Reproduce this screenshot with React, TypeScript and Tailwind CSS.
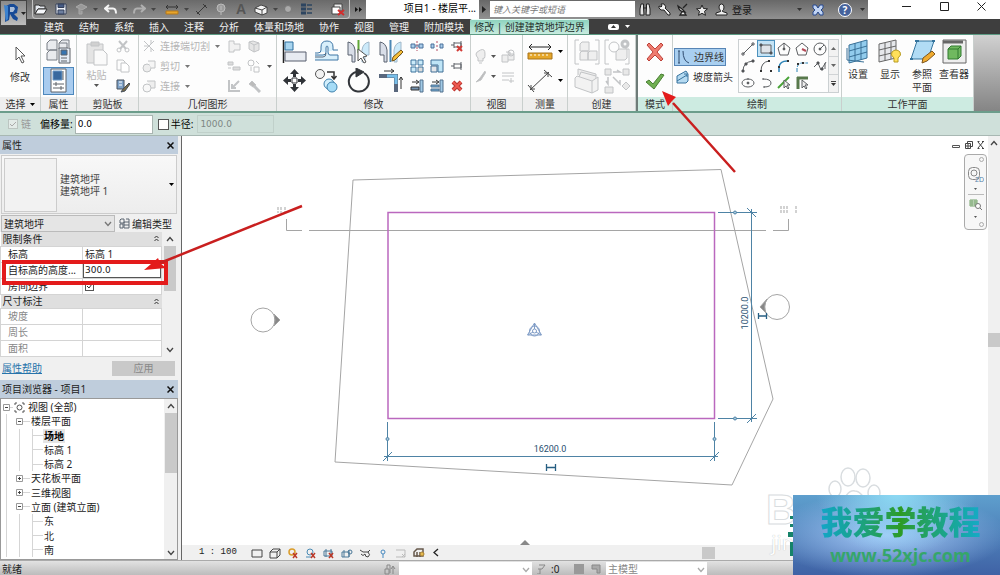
import React from "react";
import type { ReactNode } from "react";

type IconProps = { w?: number; h?: number; children: ReactNode; stroke?: string; className?: string };

function Svg({ w = 16, h = 16, children, stroke = "#5f6368", className = "" }: IconProps) {
  return (
    <svg width={w} height={h} viewBox={`0 0 ${w} ${h}`} fill="none" stroke={stroke} className={`shrink-0 ${className}`} aria-hidden="true">
      {children}
    </svg>
  );
}

function Tool({ label, children, className = "" }: { label: string; children: ReactNode; className?: string }) {
  return (
    <button type="button" aria-label={label} className={`flex shrink-0 items-center justify-center ${className}`}>
      {children}
    </button>
  );
}

function Caret({ className = "text-[#555]" }: { className?: string }) {
  return (
    <svg width="5" height="3" viewBox="0 0 5 3" className={`shrink-0 fill-current ${className}`} aria-hidden="true">
      <path d="M0 0h5L2.500 3z" />
    </svg>
  );
}

function Chevron({ up = false, color = "#444" }: { up?: boolean; color?: string }) {
  return (
    <Svg w={8} h={6} stroke={color}>
      <path d={up ? "M1 5l3-3.500 3 3.500" : "M1 1l3 3.500L7 1"} strokeWidth="1.300" />
    </Svg>
  );
}

function Panel({ title, width, green = false, children, menu = false }: { title: string; width: string; green?: boolean; children: ReactNode; menu?: boolean }) {
  return (
    <section className={`flex shrink-0 flex-col border-r border-[#c9cfcd] bg-[#fdfdfd] ${width}`}>
      <div className="flex h-[62px] items-center justify-center">{children}</div>
      <h2 className={`flex h-[14px] items-center justify-center gap-1 text-[10px] leading-none text-[#333] ${green ? "bg-[#cdebe1]" : "bg-[#eeeeee]"}`}>
        {title}
        {menu && <Caret className="text-black" />}
      </h2>
    </section>
  );
}

function QuickAccess() {
  const cell = "h-4 w-4";
  return (
    <div className="ml-8 flex h-[19px] w-[318px] shrink-0 items-center gap-1 rounded-b-sm border border-t-0 border-[#c4c4c4] bg-linear-to-b from-[#6a6a6a] to-[#8d8d8d] pr-[3px]">
      <Tool label="打开" className={cell}>
        <Svg w={14} h={12} stroke="#333">
          <path d="M1 2h4l1 1h5v3H4L1 11z" fill="#e6eaf0" />
          <path d="M4 6h9l-3 5H1z" fill="#f5f7fa" />
        </Svg>
      </Tool>
      <Tool label="保存" className={cell}>
        <Svg w={12} h={12} stroke="#34405a">
          <path d="M1 1h10v10H1z" fill="#eef2f8" />
          <path d="M3 1h6v3.500H3z" fill="#455b85" />
          <path d="M3 7h6v4H3z" fill="#6d7f9f" />
        </Svg>
      </Tool>
      <Tool label="同步" className={cell}>
        <Svg w={13} h={12} stroke="#a8a8a8">
          <path d="M1 4l5-3 6 3-5 3zM4 6v5h3V8" fill="#999" />
        </Svg>
      </Tool>
      <Caret className="text-[#444]" />
      <Tool label="放弃" className={cell}>
        <Svg w={13} h={11} stroke="#f4f4f4">
          <path d="M5 1L1 4.500 5 8M1.500 4.500H9q3 0 3 5" strokeWidth="2" />
        </Svg>
      </Tool>
      <Caret className="text-[#444]" />
      <Tool label="重做" className={cell}>
        <Svg w={13} h={11} stroke="#b0b0b0">
          <path d="M8 1l4 3.500L8 8M11.500 4.500H4q-3 0-3 5" strokeWidth="2" />
        </Svg>
      </Tool>
      <Caret className="text-[#444]" />
      <Tool label="测量" className={`ml-1 ${cell}`}>
        <Svg w={14} h={11} stroke="#333">
          <path d="M1 3h12M3 1L1 3l2 2M11 1l2 2-2 2" />
          <path d="M1 7h12v3H1z" fill="#e8a62c" stroke="#b5791b" />
        </Svg>
      </Tool>
      <Caret className="text-[#444]" />
      <Tool label="尺寸标注" className={cell}>
        <Svg w={13} h={13} stroke="#3a3a3a">
          <path d="M2 11L11 2M1 8l4 4M8 1l4 4" />
        </Svg>
      </Tool>
      <Tool label="标记" className={cell}>
        <Svg w={12} h={12} stroke="#bbb">
          <circle cx="6" cy="5" r="4" fill="#9c9c9c" />
          <path d="M6 3v4M6 9v3" />
        </Svg>
      </Tool>
      <Tool label="文字" className={`${cell} font-['Liberation_Sans'] text-[14px] font-bold leading-none text-[#555]`}>A</Tool>
      <Tool label="三维视图" className={cell}>
        <Svg w={14} h={13} stroke="#444">
          <path d="M1 5l6-3 6 2v6l-5 2-7-3z" fill="#f4f4f4" />
          <path d="M1 5l7 2 5-3M8 7v5" />
        </Svg>
      </Tool>
      <Caret className="text-[#444]" />
      <Tool label="剖面" className="h-4 w-3">
        <Svg w={10} h={10} stroke="#777"><circle cx="5" cy="5" r="3.500" fill="#aaa" /></Svg>
      </Tool>
      <Tool label="细线" className={cell}>
        <Svg w={13} h={12} stroke="#2d4560">
          <path d="M1 2h5M1 6h5M1 10h5" strokeWidth="3" /><path d="M7 2h5M7 6h5M7 10h5" strokeWidth="1.500" />
        </Svg>
      </Tool>
      <Tool label="关闭隐藏窗口" className={`ml-auto ${cell}`}>
        <Svg w={14} h={13} stroke="#444">
          <path d="M3 1h8v7H3z" fill="#eee" /><path d="M1 4h8v7H1z" fill="#fff" />
          <path d="M7 7l6 5M13 7l-6 5" stroke="#d12d2d" strokeWidth="2" />
        </Svg>
      </Tool>
    </div>
  );
}

function TitleBar() {
  return (
    <header className="relative bg-[#3e3e3e]">
      <div className="flex h-[19px] bg-linear-to-b from-[#686868] to-[#919191]">
        <QuickAccess />
        <Tool label="自定义" className="w-4">
          <Svg w={7} h={5} stroke="none"><path d="M0 0l3 2.500L0 5zM4 0l3 2.500L4 5z" fill="#111" /></Svg>
        </Tool>
        <div className="flex w-[113px] shrink-0 items-center justify-end bg-white pr-[3px] pb-1 text-[10px] leading-none text-black">项目1 - 楼层平...</div>
        <Tool label="展开" className="w-[11px]">
          <Svg w={5} h={7} stroke="none"><path d="M0 0l4 3.500L0 7z" fill="#222" /></Svg>
        </Tool>
        <input aria-label="搜索" placeholder="键入关键字或短语" className="mt-px h-4 w-[145px] shrink-0 bg-white px-[3px] text-[9px] leading-none italic placeholder:text-[#777]" />
        <div className="ml-1 flex items-center gap-[7px]">
          <Tool label="查找" className="h-4 w-3">
            <Svg w={12} h={13} stroke="#222">
              <path d="M2 1h2.500v4L5 12H1V6zM10 1H7.500v4L7 12h4V6zM5 5h2" fill="#e5e5e5" />
            </Svg>
          </Tool>
          <Tool label="速博" className="h-4 w-3">
            <Svg w={13} h={13} stroke="#222"><path d="M6 7H3L1 5V3l2 1 1-1-1-2h3l2 3-1 1 5 5v2h-2z" fill="#f2f2f2" /></Svg>
          </Tool>
          <Tool label="通信中心" className="h-4 w-3">
            <Svg w={12} h={13} stroke="#222"><path d="M1 3q1 6 7 6L5 6zM5 9l-2 3h6L7 9M6 5l4-4" fill="#eee" strokeWidth="1.300" /></Svg>
          </Tool>
          <Tool label="收藏夹" className="h-4 w-3">
            <Svg w={12} h={12} stroke="#222"><path d="M6 1l1.500 3.500 4 .3-3 2.500 1 4L6 9.300l-3.500 2 1-4-3-2.500 4-.3z" fill="#eee" /></Svg>
          </Tool>
          <button type="button" className="flex items-center gap-1 text-[10px] leading-none text-[#161616]">
            <Svg w={13} h={13} stroke="#222"><path d="M4 4q0-3 2.500-3T9 4 7.500 7.500v1L12 10v2H1v-2l4.500-1.500v-1Q4 6 4 4z" fill="#eee" /></Svg>
            登录
          </button>
        </div>
        <div className="flex flex-1 items-center justify-end gap-2 pr-[3px]">
          <Caret className="text-[#333]" />
          <Tool label="应用商店" className="h-4 w-4">
            <Svg w={12} h={12} stroke="#27498f">
              <path d="M1 1h3l2 3 2-3h3v3L9 6l2 2v3H8L6 8l-2 3H1V8l2-2-2-2z" fill="#c2d5f4" />
            </Svg>
          </Tool>
          <Tool label="帮助" className="ml-1 h-[14px] w-[14px] rounded-full border border-white bg-[#45629c] text-[10px] font-bold leading-none text-white">?</Tool>
          <Caret className="text-[#333]" />
        </div>
        <div className="flex w-[132px] shrink-0 items-center justify-between bg-white pr-[14px] pb-[6px] pl-[34px]">
          <Tool label="最小化"><Svg w={9} h={9} stroke="#222"><path d="M0 4.500h9" /></Svg></Tool>
          <Tool label="最大化"><Svg w={9} h={9} stroke="#222"><path d="M.5.5h8v8h-8z" /></Svg></Tool>
          <Tool label="关闭"><Svg w={9} h={9} stroke="#222"><path d="M.5.5l8 8M8.500.5l-8 8" /></Svg></Tool>
        </div>
      </div>
      <nav className="flex h-[15px] items-stretch pl-[44px] text-[10px] leading-none text-[#f1f1f1]">
        <div className="flex shrink-0 items-center gap-[15px]">
          {["建筑", "结构", "系统", "插入", "注释", "分析", "体量和场地", "协作", "视图", "管理", "附加模块"].map((t) => (
            <a key={t} href="#" className="shrink-0">{t}</a>
          ))}
        </div>
        <a href="#" className="ml-[6px] flex w-[119px] shrink-0 items-center justify-center rounded-t-xs border-t border-[#e8fff8] bg-linear-to-b from-[#8ed3bf] to-[#c8ebdf] text-[#26332f]">
          修改 | 创建建筑地坪边界
        </a>
        <div className="ml-[19px] flex items-center gap-[6px]">
          <Tool label="最小化功能区" className="h-[6px] w-[11px] rounded-xs bg-white">
            <Svg w={5} h={3} stroke="none"><path d="M0 3h5L2.500 0z" fill="#333" /></Svg>
          </Tool>
          <Caret className="text-white" />
        </div>
      </nav>
      <button type="button" aria-label="应用程序菜单" className="absolute top-0 left-0 flex h-[26px] w-[27px] items-center gap-px border border-[#444] bg-linear-to-b from-[#8a8a8a] to-[#bdbdbd] pl-[3px]">
        <Svg w={16} h={20} stroke="none">
          <path d="M2 3l4-2h4l4 3-1 6-3 1 4 4-1 3-4-2-3-5-1 6-4 2z" fill="#174a96" />
          <path d="M6 4h4l1 2-2 3H6z" fill="#a9bcd6" /><path d="M0 2l4 1v13l-2 2z" fill="#3b82cf" />
        </Svg>
        <Caret className="text-[#222]" />
      </button>
    </header>
  );
}

const PALE = "#c2c4c6";

function ModifyTools() {
  const big = "h-[26px] w-[26px]";
  return (
    <div className="flex w-full items-center gap-[6px] pl-1">
      <div className="grid grid-cols-[repeat(4,26px)] gap-x-[6px] gap-y-[3px]">
        <Tool label="对齐" className={big}>
          <Svg w={25} h={25}>
            <path d="M1.500 1v23" stroke="#222" strokeWidth="1.500" />
            <path d="M3 3h8v8H3z" fill="#a9d5ef" stroke="#2d6f9e" /><path d="M3 13h21v9H3z" fill="#e8ebf1" stroke="#565d6c" />
          </Svg>
        </Tool>
        <Tool label="偏移" className={big}>
          <Svg w={25} h={25} stroke="#3e76a5">
            <path d="M1 14h3q3 0 3-3V8q0-6 6-6t6 6v3h5M1 21h23v-5h-8q-2 0-2-3V9q0-2-1-2t-1 2v4q0 3-3 3H1" fill="#d8effb" />
            <path d="M1 18h8q3 0 3-4" stroke="#5e6b7c" />
          </Svg>
        </Tool>
        <Tool label="镜像 - 拾取轴" className={big}>
          <Svg w={25} h={25}>
            <path d="M2 3q6 1 7 8v12H6v-7H2z" fill="#d9dee8" stroke="#5a6371" /><path d="M23 3q-6 1-7 8v12h3v-7h4z" fill="#cceafa" stroke="#a1b8ca" />
            <path d="M12.500 1v13" stroke="#5fa636" strokeWidth="2" /><path d="M12 10v12l3-3 3 5 2-1-3-5 4-1z" fill="#fff" stroke="#555" />
          </Svg>
        </Tool>
        <Tool label="镜像 - 绘制轴" className={big}>
          <Svg w={25} h={25}>
            <path d="M2 3q6 1 7 8v12H6v-7H2z" fill="#d9dee8" stroke="#5a6371" /><path d="M23 3q-6 1-7 8v12h3v-7h4z" fill="#cceafa" stroke="#a1b8ca" />
            <path d="M12.500 1v22" stroke="#4d88b5" strokeWidth="2" /><path d="M14 22l1-4 8-7 2 2-8 8z" fill="#f5bf39" stroke="#765416" />
          </Svg>
        </Tool>
        <Tool label="移动" className={big}>
          <Svg w={25} h={25} stroke="#303338">
            <path d="M12.500 4v5M12.500 16v5M4 12.500h5M16 12.500h5" strokeWidth="3" />
            <path d="M8 6h9l-4.500-5zM8 19h9l-4.500 5zM6 8v9l-5-4.500zM19 8v9l5-4.500z" fill="#303338" stroke="none" /><path d="M10 10h5v5h-5z" fill="#fff" />
          </Svg>
        </Tool>
        <Tool label="复制" className={big}>
          <Svg w={25} h={25}>
            <circle cx="6" cy="6" r="4.500" fill="#f2f2f2" stroke="#555" /><circle cx="15" cy="16" r="5" fill="#d3effc" stroke="#3e81ad" />
            <circle cx="18" cy="19" r="5" fill="#a5dbf6" stroke="#3e81ad" /><path d="M13 4h7v6M17.500 8l2.500 3 2.500-3" stroke="#333" strokeWidth="1.500" />
          </Svg>
        </Tool>
        <Tool label="旋转" className={big}>
          <Svg w={25} h={25} stroke="#33363b">
            <path d="M10 4a10 10 0 1 0 8 1" strokeWidth="2" /><path d="M10 0l8 4-8 5z" fill="#33363b" />
          </Svg>
        </Tool>
        <Tool label="修剪/延伸为角" className={big}>
          <Svg w={25} h={25} stroke="#333">
            <path d="M6 3h10M13 1l3 2-3 2M23 21V9M21 12l2-3 2 3" /><path d="M1 8h17v16" stroke="#59677d" strokeWidth="4" />
            <path d="M9 8h9v8" stroke="#79bfe9" strokeWidth="3" />
          </Svg>
        </Tool>
      </div>
      <div className="grid grid-cols-[repeat(3,16px)] gap-x-1 gap-y-[6px]">
        <Tool label="拆分图元"><Svg w={14} h={14} stroke="#4a719b"><path d="M1 5h4v4H1zM9 5h4v4H9z" fill="#a9ccea" /><path d="M7 2v10" stroke="#b44f65" strokeDasharray="2 1" /><path d="M5 7h4" /></Svg></Tool>
        <Tool label="用间隙拆分"><Svg w={14} h={14} stroke="#4a719b"><path d="M1 5h3v4H1zM10 5h3v4h-3z" fill="#a9ccea" /><path d="M7 2v2M7 10v2M6 7h2" stroke="#b44f65" /></Svg></Tool>
        <Tool label="解锁"><Svg w={14} h={14} stroke="#5e6269"><path d="M1 6h3M4 3v6M4 4h7v4H4M11 2v8" /><path d="M7 7l5 5M12 7l-5 5" stroke="#d23b36" strokeWidth="2" /></Svg></Tool>
        <Tool label="阵列"><Svg w={14} h={14} stroke="#3d729c"><path d="M1 1h5v5H1zM8 1h5v5H8zM1 8h5v5H1z" fill="#caeaf9" /><path d="M8 8h5v5H8z" fill="#ddd" /></Svg></Tool>
        <Tool label="缩放"><Svg w={14} h={14} stroke="#416f95"><path d="M1 1h12v12H8V6H1z" fill="#bfe5f7" /><path d="M1 7h6v6H1z" fill="#e4e7eb" /></Svg></Tool>
        <Tool label="锁定"><Svg w={14} h={14} stroke="#5e6269"><path d="M1 7h3M4 4v6M4 5h7v4H4M11 3v8" /></Svg></Tool>
        <Tool label="修剪单个图元"><Svg w={14} h={14} stroke="#333"><path d="M2 3h6M6 1l3 2-3 2" /><path d="M1 8h8v3H1z" fill="#7492b0" /><path d="M10 1h3v12h-3z" fill="#a1cae6" stroke="#506f8b" /></Svg></Tool>
        <Tool label="修剪多个图元"><Svg w={14} h={14} stroke="#333"><path d="M2 3h6M6 1l3 2-3 2" /><path d="M1 6h8v2H1zM1 10h8v2H1z" fill="#69a5d2" stroke="#55738e" /><path d="M10 1h3v12h-3z" fill="#a1cae6" stroke="#506f8b" /></Svg></Tool>
        <Tool label="删除"><Svg w={14} h={14} stroke="#b93530"><path d="M3 3l8 8M11 3l-8 8" strokeWidth="4" /><path d="M3 3l8 8M11 3l-8 8" stroke="#ee5a50" strokeWidth="2" /></Svg></Tool>
      </div>
    </div>
  );
}

function DrawGallery() {
  const shapes: { label: string; art: ReactNode }[] = [
    { label: "直线", art: <path d="M2 12L12 2M1 11h2v2H1zM11 1h2v2h-2z" /> },
    { label: "矩形", art: <><path d="M2 3h10v8H2z" fill="#dfe4e9" /><path d="M1 2h2v2H1zM11 10h2v2h-2z" fill="#333" /></> },
    { label: "内接多边形", art: <><path d="M7 1l6 5-2 7H3L1 6z" /><path d="M7 1v6" /><circle cx="7" cy="7" r="1" fill="#333" /></> },
    { label: "外接多边形", art: <><path d="M7 1l6 5-2 7H3L1 6z" /><path d="M7 7l4 2" stroke="#b54b58" strokeWidth="2" /></> },
    { label: "圆形", art: <><circle cx="7" cy="7" r="6" /><path d="M7 7l4-4" /><circle cx="7" cy="7" r="1" fill="#333" /></> },
    { label: "起点-终点-半径弧", art: <><path d="M2 12Q2 3 12 2" /><path d="M1 11h2v2H1zM4 4h2v2H4zM11 1h2v2h-2z" fill="#333" /></> },
    { label: "圆心-端点弧", art: <><path d="M2 12Q2 3 10 2" /><path d="M1 11h2v2H1zM9 1h2v2H9zM11 11h2v2h-2z" fill="#333" stroke="none" /></> },
    { label: "相切-端点弧", art: <><path d="M2 13V8q1-6 8-6" stroke="#2c83b6" strokeWidth="1.500" /><path d="M1 7h2v2H1zM10 1h2v2h-2z" fill="#333" stroke="none" /></> },
    { label: "圆角弧", art: <><path d="M2 13V9q1-5 5-5h6" stroke="#2c83b6" strokeDasharray="4 1" /><path d="M2 4h2v2H2zM7 3h2v2H7z" fill="#333" stroke="none" /></> },
    { label: "样条曲线", art: <><path d="M1 8l4-4 3 7 5-8M12 4v6" /><path d="M4 3h2v2H4zM8 9h2v2H8z" fill="#333" /></> },
    { label: "椭圆", art: <><ellipse cx="7" cy="7" rx="6" ry="4" /><circle cx="7" cy="7" r="1" fill="#333" /><path d="M7 2v2" /></> },
    { label: "半椭圆", art: <path d="M4 3q8 0 8 4t-7 4M4 2v2M5 10v2" /> },
    { label: "拾取线", art: <><path d="M1 12L12 1" stroke="#49a338" strokeWidth="2" /><path d="M7 4v8l2-2 2 3 1-1-2-3h3z" fill="#eee" /></> },
    { label: "拾取墙", art: <><path d="M3 1v12M2 2h11" stroke="#58794c" strokeWidth="3" /><path d="M7 4v8l2-2 2 3 1-1-2-3h3z" fill="#eee" /></> },
  ];
  return (
    <div className="flex h-[54px] w-[101px] border border-[#cbd0d2]">
      <div className="grid flex-1 grid-cols-[repeat(5,18px)] grid-rows-3 overflow-hidden">
        {shapes.map((s) => (
          <Tool key={s.label} label={s.label} className={s.label === "矩形" ? "border border-[#4c91bd] bg-[#c4e3f5]" : ""}>
            <Svg w={14} h={14} stroke="#5c5f62">{s.art}</Svg>
          </Tool>
        ))}
      </div>
      <div className="grid w-[10px] grid-rows-3 divide-y divide-[#d0d3d5] border-l border-[#cbd0d2] bg-[#f2f2f2]">
        <Tool label="上一行"><Caret className="rotate-180 text-[#666]" /></Tool>
        <Tool label="下一行"><Caret className="text-[#666]" /></Tool>
        <Tool label="展开列表" className="flex-col gap-px"><span className="h-px w-[5px] bg-[#444]" /><Caret className="text-[#333]" /></Tool>
      </div>
    </div>
  );
}

function Ribbon() {
  const geo = [
    { t: "连接端切割", a: <path d="M2 2l5 5-5 5M2 7h5l5-5M7 7l5 5M9 1v4M9 9v4" /> },
    { t: "剪切", a: <><circle cx="5" cy="9" r="4" fill="#eee" /><path d="M6 2h7v7H9" fill="#f5f5f5" /></> },
    { t: "连接", a: <><path d="M5 2h8v7H9" fill="#eee" /><circle cx="5" cy="9" r="4" fill="#f8f8f8" /></> },
  ];
  return (
    <div className="flex border-t border-b-2 border-t-[#5d9b84] border-b-[#6c9d8b] bg-linear-to-b from-[#d1d1d1] to-[#858585]">
      <Panel title="选择" width="w-[41px]" menu>
        <button type="button" className="flex flex-col items-center gap-2 pb-1 text-[10px] leading-none text-[#333]">
          <Svg w={12} h={18} stroke="#555"><path d="M2 1v13l3-3 3 6 2-1-3-6h4z" fill="#fff" /></Svg>
          修改
        </button>
      </Panel>
      <Panel title="属性" width="w-[36px]">
        <div className="flex flex-col items-center gap-[2px]">
          <Tool label="类型属性" className="h-[27px] w-[31px]">
            <Svg w={25} h={25}><path d="M1 4l3-3h7v10H1zM13 4l3-3h7v7M1 14l3-3h7v10H1zM13 10V4h8v5" fill="#e9ebee" stroke="#777d84" /><path d="M13 9h11v15H13z" fill="#e5edf6" /><path d="M15 11h6v5h-6z" fill="#3674b0" /><path d="M15 19h6M15 22h6" /></Svg>
          </Tool>
          <Tool label="属性" className="h-[28px] w-[31px] border border-[#4d88bd] bg-[#a9ccef]">
            <Svg w={17} h={25}><path d="M1 1h15v23H1z" fill="#fff" /><path d="M3 3h9v9H3z" fill="#39699e" stroke="#6b98c5" /><path d="M13 3v9M3 16h11M3 20h11M6 14v4M11 18v4" /></Svg>
          </Tool>
        </div>
      </Panel>
      <Panel title="剪贴板" width="w-[62px]">
        <div className="flex items-center gap-2">
          <button type="button" className="flex flex-col items-center gap-1 pb-1 text-[10px] leading-none text-[#b7b7b7]">
            <Svg w={22} h={25} stroke={PALE}><path d="M1 3h16v19H1z" fill="#e4e4e4" /><path d="M5 1h8v4H5z" fill="#d0d0d0" /><path d="M8 9h9l4 4v11H8z" fill="#fafafa" /></Svg>
            粘贴
            <Caret className="text-[#555]" />
          </button>
          <div className="flex flex-col gap-[6px]">
            <Tool label="剪切到剪贴板"><Svg w={14} h={14} stroke={PALE}><path d="M3 2l7 8M11 2L4 10" strokeWidth="2" /><circle cx="3" cy="11" r="2" /><circle cx="11" cy="11" r="2" /></Svg></Tool>
            <Tool label="复制到剪贴板"><Svg w={14} h={14} stroke={PALE}><path d="M1 1h6l2 2v8H1z" /><path d="M5 4h5l3 3v6H5z" fill="#fff" /></Svg></Tool>
            <Tool label="匹配类型属性"><Svg w={14} h={14} stroke="#47515c"><path d="M1 1h7v9H1z" fill="#7fa3c9" /><path d="M3 3h3M3 6h3" stroke="#fff" /><path d="M13 4L7 10l-2 3 4-1 5-7z" fill="#786b47" /></Svg></Tool>
          </div>
        </div>
      </Panel>
      <Panel title="几何图形" width="w-[138px]">
        <div className="flex w-full items-center justify-between pr-1 pl-[3px]">
          <div className="flex flex-col gap-[6px]">
            {geo.map((g) => (
              <button key={g.t} type="button" className="flex h-[14px] items-center gap-1 text-[10px] leading-none text-[#b5b5b5]">
                <Svg w={14} h={14} stroke={PALE}>{g.a}</Svg>
                {g.t}
                <Caret className="ml-px text-[#777]" />
              </button>
            ))}
          </div>
          <div className="grid grid-cols-[14px_14px_5px] items-center gap-x-[6px] gap-y-[6px]">
            <Tool label="墙连接"><Svg w={14} h={14} stroke={PALE}><path d="M2 2h5v3h6v6H7v2H2z" fill="#f1f1f1" /></Svg></Tool>
            <Tool label="填色"><Svg w={14} h={14} stroke={PALE}><path d="M2 3l4-1 6 2v7l-5 2-5-3zM7 6v7M7 6l5-2M7 6L2 3" fill="#e5e5e5" /></Svg></Tool>
            <span />
            <Tool label="梁连接"><Svg w={14} h={14} stroke={PALE}><path d="M1 3h5v3H1zM6 8h7v3H6zM1 9h3" fill="#ddd" /></Svg></Tool>
            <Tool label="拆分面"><Svg w={14} h={14} stroke={PALE}><circle cx="4" cy="4" r="3" /><path d="M7 8h5v5H7zM9 2l3 3M4 8v4" /></Svg></Tool>
            <Caret />
            <Tool label="拆除"><Svg w={14} h={14} stroke={PALE}><path d="M2 1v11h11M5 9l7-7M5 5v4h4" strokeWidth="2" /></Svg></Tool>
            <Tool label="锤子"><Svg w={14} h={14} stroke={PALE}><path d="M2 5l3-3 4 4-3 2z" fill="#bbb" /><path d="M7 7l6 6" strokeWidth="3" /></Svg></Tool>
            <span />
          </div>
        </div>
      </Panel>
      <Panel title="修改" width="w-[194px]"><ModifyTools /></Panel>
      <Panel title="视图" width="w-[52px]">
        <div className="grid grid-cols-[11px_5px_14px] items-center gap-x-[5px] gap-y-[6px] pr-1">
          <Tool label="隐藏"><Svg w={11} h={15} stroke={PALE}><path d="M3 9Q1 7 1 5t4.500-4T10 5 8 9v3H3zM4 14h3" fill="#eee" /></Svg></Tool><Caret />
          <Tool label="置换"><Svg w={14} h={14} stroke={PALE}><path d="M1 6h6v7H1zM5 3h4v3M8 5h5v6H7" fill="#eee" /><circle cx="10" cy="4" r="3" /></Svg></Tool>
          <Tool label="替代"><Svg w={11} h={13} stroke={PALE}><path d="M10 1L5 8l-4 4 5-2 5-8" fill="#bbb" /></Svg></Tool><Caret />
          <Tool label="线处理"><Svg w={14} h={14} stroke={PALE}><path d="M1 3h12M1 6h12M1 10h7" /><path d="M10 8v5M8 11h5" /></Svg></Tool>
        </div>
      </Panel>
      <Panel title="测量" width="w-[45px]">
        <div className="grid grid-cols-[26px_5px] items-center gap-x-[5px] gap-y-[3px]">
          <Tool label="测量距离"><Svg w={26} h={26} stroke="#222"><path d="M2 8h22M5 5L2 8l3 3M21 5l3 3-3 3" /><path d="M1 14h24v6H1z" fill="#e5a72b" stroke="#a7731b" /><path d="M4 15v2M8 15v2M12 15v2M16 15v2M20 15v2" stroke="#fff" /></Svg></Tool><Caret className="text-black" />
          <Tool label="对齐标注"><Svg w={26} h={26} stroke="#444"><path d="M3 22L22 4M1 17l6 7M17 2l8 7M4 17v4h4M17 5h4v4" /></Svg></Tool><Caret className="text-black" />
        </div>
      </Panel>
      <Panel title="创建" width="w-[68px]">
        <div className="grid grid-cols-2 gap-x-1 gap-y-[3px]">
          <Tool label="创建组"><Svg w={26} h={26} stroke={PALE}><path d="M5 1H1v24h4M21 1h4v24h-4" /><path d="M6 5l2-2h7v9H6zM6 14l2-2h6v9H6zM14 14l2-2h7v9h-9z" fill="#efefef" /></Svg></Tool>
          <Tool label="创建类似"><Svg w={26} h={26} stroke={PALE}><path d="M5 1H1v24h4M21 10h4v15h-4" /><circle cx="10" cy="8" r="5" /><path d="M12 13l3-3h8v9l-2 2h-9z" fill="#efefef" /><circle cx="21" cy="5" r="3" strokeWidth="3" /></Svg></Tool>
          <Tool label="创建部件"><Svg w={26} h={26} stroke={PALE}><path d="M4 7V1l18 5v14" fill="#eee" /><path d="M1 10l2-2 15 5v12L1 19zM18 13l6-4v13l-6 3M5 9l2-5 15 4" fill="#f2f2f2" /></Svg></Tool>
          <Tool label="创建零件"><Svg w={26} h={26} stroke={PALE}><path d="M1 1h6v6H1zM19 1h6v6h-6zM1 19h8v6H1zM22 14l4 4-4 4-4-4z" fill="#e8e8e8" /><path d="M9 4h7l-3-2M4 9v7l-2-3M9 9l7 7v-4" strokeWidth="1.500" /></Svg></Tool>
        </div>
      </Panel>
      <div className="w-[2px] shrink-0 bg-[#6e7b78]" />
      <Panel title="模式" width="w-[35px]" green>
        <div className="flex flex-col gap-[10px]">
          <Tool label="取消编辑模式"><Svg w={20} h={20} stroke="#bd423a"><path d="M2 3l2-2 6 6 6-6 2 2-6 7 6 7-2 2-6-6-6 6-2-2 6-7z" fill="#ef7c70" /></Svg></Tool>
          <Tool label="完成编辑模式"><Svg w={20} h={18} stroke="#4b7f35"><path d="M1 10l3-2 4 4L16 2l3 1L9 17z" fill="#70b051" /></Svg></Tool>
        </div>
      </Panel>
      <Panel title="绘制" width="w-[169px]" green>
        <div className="flex w-full items-center gap-[5px] pr-[2px] pl-px">
          <div className="flex flex-1 flex-col gap-1 text-[10px] leading-none text-[#333]">
            <button type="button" className="flex h-[18px] w-[52px] items-center gap-1 border border-[#5785b5] bg-[#a9cff0] pl-[2px] whitespace-nowrap">
              <Svg w={13} h={14} stroke="#304c6f"><path d="M2 1v12M6 1q0 10 6 12M1 1h2M1 13h2" /></Svg>
              边界线
            </button>
            <button type="button" className="flex h-[14px] items-center gap-1 pl-[2px] whitespace-nowrap">
              <Svg w={13} h={14} stroke="#37739e"><path d="M1 6l9-5 2 3v7l-2 2H1z" fill="#b5daf1" /><path d="M1 11l10-6M8 4h3v3" /></Svg>
              坡度箭头
            </button>
          </div>
          <DrawGallery />
        </div>
      </Panel>
      <Panel title="工作平面" width="w-[132px]" green>
        <div className="grid h-full w-full grid-cols-4 pt-1 pr-[3px] text-[10px] leading-[13px] text-[#333]">
          <button type="button" className="flex flex-col items-center gap-1">
            <Svg w={24} h={25} stroke="#3a7197"><path d="M3 6l18-5v18L3 24z" fill="#92cced" /><path d="M9 4v18M15 3v18M3 12l18-5M3 18l18-5" /><path d="M1 9v12l17 2" /></Svg>
            设置
          </button>
          <button type="button" className="flex flex-col items-center gap-1">
            <Svg w={24} h={25} stroke="#666"><path d="M1 5l17-4v18L1 23z" fill="#e6e8eb" /><path d="M7 4v18M13 3v17M1 11l17-4M1 17l17-4" /><path d="M16 19q-4-3-2-6 4-4 8 0 2 3-2 6v4h-4z" fill="#ffe05a" stroke="#b89c25" /></Svg>
            显示
          </button>
          <button type="button" className="flex flex-col items-center gap-1">
            <Svg w={25} h={25} stroke="#35749d"><path d="M7 2h17l-6 18H1z" fill="#b1dcf5" /><path d="M5 2h4M22 2h3M0 20h3" strokeWidth="2" /><path d="M12 24l1-5 9-7 3 3-8 7z" fill="#f0ac31" stroke="#7e561c" /></Svg>
            <span className="text-center">参照<br />平面</span>
          </button>
          <button type="button" className="flex flex-col items-center gap-1 whitespace-nowrap">
            <Svg w={25} h={25} stroke="#666"><path d="M1 1h23v23H1z" fill="#eee" /><path d="M1 3h20" strokeWidth="3" /><path d="M6 10l3-3h10v10l-3 3H6z" fill="#70b95f" stroke="#317b31" /><path d="M6 10h10v10M16 10l3-3" stroke="#317b31" /></Svg>
            查看器
          </button>
        </div>
      </Panel>
    </div>
  );
}

function OptionsBar() {
  return (
    <div className="flex h-[23px] shrink-0 items-center border-b border-[#a8b8b3] bg-[#cfe0da] pl-2 text-[10px] leading-none">
      <label className="flex items-center gap-[3px] text-[#999]">
        <span className="relative flex size-[10px]">
          <input type="checkbox" defaultChecked disabled className="size-[10px] appearance-none border border-[#bcc5c1] bg-[#e3ebe8]" />
          <svg className="pointer-events-none absolute inset-0" width="10" height="10" viewBox="0 0 10 10" fill="none" stroke="#aaa"><path d="M2 5l2 2 4-4" /></svg>
        </span>
        链
      </label>
      <label className="ml-[9px] flex items-center gap-[2px] text-black">
        偏移量:
        <input defaultValue="0.0" className="h-[19px] w-[78px] border border-[#a9b5b1] bg-white px-[2px] font-['DejaVu_Sans'] text-[9px]" />
      </label>
      <label className="ml-[5px] flex items-center gap-[2px] text-black">
        <input type="checkbox" className="size-[11px] appearance-none border border-[#555] bg-white" />
        半径:
      </label>
      <input aria-label="半径值" disabled defaultValue="1000.0" className="ml-1 h-[18px] w-[77px] border border-[#c0d0ca] px-[2px] font-['DejaVu_Sans'] text-[9px] text-[#7e8784]" />
    </div>
  );
}

function PanelHeader({ title }: { title: string }) {
  return (
    <div className="flex h-[18px] shrink-0 items-center justify-between bg-[#bfcddc] pr-[2px] pl-[2px] text-[10px] leading-none text-[#222]">
      {title}
      <Tool label={`关闭${title}`} className="h-3 w-3"><Svg w={7} h={7} stroke="#111"><path d="M.5.5l6 6M6.500.5l-6 6" strokeWidth="1.500" /></Svg></Tool>
    </div>
  );
}

function Scroller({ thumb }: { thumb: string }) {
  return (
    <div className="flex w-[13px] shrink-0 flex-col items-center bg-[#f0f0f0]">
      <Tool label="向上滚动" className="h-[14px] w-full"><Chevron up /></Tool>
      <div className={`w-[12px] bg-[#c9c9c9] ${thumb}`} />
      <Tool label="向下滚动" className="mt-auto h-[13px] w-full"><Chevron /></Tool>
    </div>
  );
}

function GroupRow({ name }: { name: string }) {
  return (
    <tr className="h-[14px] bg-[#dfdfdf]">
      <th colSpan={2} className="p-0 pr-[3px] pl-[2px] text-left font-normal text-[#222]">
        <div className="flex items-center justify-between leading-none">
          {name}
          <Svg w={5} h={7} stroke="#333"><path d="M.5 3l2-2 2 2M.5 6l2-2 2 2" /></Svg>
        </div>
      </th>
    </tr>
  );
}

function Properties() {
  const cell = "border border-[#d4d4d4] p-0";
  return (
    <section className="shrink-0">
      <PanelHeader title="属性" />
      <div className="p-px">
        <button type="button" className="flex h-[59px] w-full items-center border border-[#ccc] bg-linear-to-b from-[#f8f8f8] to-[#ededed] px-[2px] text-left text-[10px] leading-[12px] text-[#444]">
          <span className="mr-[3px] h-[54px] w-[53px] border border-[#ccc] bg-[#f2f2f2]" />
          <span className="flex-1">建筑地坪<br />建筑地坪 1</span>
          <Caret className="text-black" />
        </button>
      </div>
      <div className="flex h-[17px] items-center text-[10px] leading-none">
        <div className="relative ml-px w-[114px]">
          <select aria-label="类别" className="h-[17px] w-full appearance-none border border-[#bbb] bg-[#e5e5e5] pl-[2px] text-[#222]"><option>建筑地坪</option></select>
          <span className="pointer-events-none absolute top-[6px] right-[3px]"><Chevron color="#777" /></span>
        </div>
        <button type="button" className="ml-1 flex items-center gap-[2px] text-[#222]">
          <Svg w={11} h={11} stroke="#5a6570"><path d="M1 2l1-1h3v4H1zM7 1h3v3M1 6h3v4H1zM5 4h5v6H5zM5 7h5" /></Svg>
          编辑类型
        </button>
      </div>
      <div className="flex h-[124px]">
        <table className="w-[162px] table-fixed border-collapse bg-white text-[10px] leading-none text-[#222]">
          <colgroup><col className="w-[82px]" /><col /></colgroup>
          <tbody>
            <GroupRow name="限制条件" />
            <tr className="h-4"><td className={`${cell} pl-[7px]`}>标高</td><td className={`${cell} pl-[2px]`}>标高 1</td></tr>
            <tr className="h-4">
              <td className={`${cell} pl-[7px] whitespace-nowrap`}>自标高的高度...</td>
              <td className={cell}><input aria-label="自标高的高度" defaultValue="300.0" className="block h-[15px] w-full border border-[#555] pl-px font-['DejaVu_Sans'] text-[9px]" /></td>
            </tr>
            <tr className="h-4"><td className={`${cell} pl-[7px]`}>房间边界</td><td className={`${cell} pl-[2px]`}>
              <label className="relative flex size-[9px]">
                <input type="checkbox" aria-label="房间边界" defaultChecked className="size-[9px] appearance-none border border-[#555]" />
                <svg className="pointer-events-none absolute inset-0" width="9" height="9" viewBox="0 0 9 9" fill="none" stroke="#333"><path d="M2 4l2 2 3-4" /></svg>
              </label>
            </td></tr>
            <GroupRow name="尺寸标注" />
            {["坡度", "周长", "面积"].map((n) => (
              <tr key={n} className="h-4 text-[#888]"><td className={`${cell} pl-[7px]`}>{n}</td><td className={cell} /></tr>
            ))}
          </tbody>
        </table>
        <div className="ml-px flex"><Scroller thumb="h-[45px]" /></div>
      </div>
      <div className="flex h-[24px] items-center justify-between pr-[3px] pl-[2px] text-[10px] leading-none">
        <a href="#" className="text-[#2673ab] underline">属性帮助</a>
        <button type="button" disabled className="h-[15px] w-[63px] bg-[#c9c9c9] text-[#888]">应用</button>
      </div>
    </section>
  );
}

function Browser() {
  const rows = [
    { d: 0, t: "视图 (全部)", s: "-" },
    { d: 1, t: "楼层平面", s: "-" },
    { d: 2, t: "场地", b: true },
    { d: 2, t: "标高 1" },
    { d: 2, t: "标高 2" },
    { d: 1, t: "天花板平面", s: "+" },
    { d: 1, t: "三维视图", s: "+" },
    { d: 1, t: "立面 (建筑立面)", s: "-" },
    { d: 2, t: "东" },
    { d: 2, t: "北" },
    { d: 2, t: "南" },
  ];
  return (
    <section className="flex min-h-0 flex-1 flex-col">
      <PanelHeader title="项目浏览器 - 项目1" />
      <div className="flex min-h-0 flex-1 border border-[#999] bg-white">
        <ul className="flex flex-1 flex-col pt-px pb-[2px] pl-[2px] text-[10px] leading-none text-[#222]">
          {rows.map((r) => (
            <li key={r.t} className="flex flex-1 items-stretch">
              {r.d > 0 && <span className="ml-[3px] w-[10px] border-l border-[#d5d5d5]" />}
              {r.d > 1 && <span className="ml-[3px] w-[13px] border-l border-[#d5d5d5]" />}
              {r.d > 1 && <span className="flex w-[11px] items-center border-l border-[#d5d5d5]"><span className="h-px w-full bg-[#d5d5d5]" /></span>}
              {r.s && (
                <span className="flex items-center">
                  <Svg w={7} h={7} stroke="#999"><path d="M.5.5h6v6h-6z" fill="#fff" /><path d={r.s === "+" ? "M2 3.500h3M3.500 2v3" : "M2 3.500h3"} stroke="#444" /></Svg>
                  <span className={`h-px bg-[#d5d5d5] ${r.d ? "w-[7px]" : "w-[3px]"}`} />
                  {r.d === 0 && <Svg w={11} h={11} stroke="#555" className="mr-[2px] ml-px"><path d="M1 3V1h2M8 1h2v2M10 8v2H8M3 10H1V8" /><circle cx="5.500" cy="5.500" r="2.500" /></Svg>}
                </span>
              )}
              <span className={`flex items-center px-px whitespace-nowrap ${r.b ? "bg-[#e5e5e5] font-bold text-black" : ""}`}>{r.t}</span>
            </li>
          ))}
        </ul>
        <Scroller thumb="h-[60px]" />
      </div>
    </section>
  );
}

function Plan() {
  return (
    <svg className="block h-full w-full" viewBox="182 136 806 409" preserveAspectRatio="xMinYMin meet" fill="none" role="img" aria-label="场地">
      <g stroke="#a5a5a5">
        <path d="M353 180L721 169.500 773 399 732 485 335 462z" />
        <path d="M286.500 219v11.500H302M309 230.500H766M773 230.500H788.500V219" />
        <circle cx="263" cy="320" r="12" /><path d="M274 314l6 6-6 6q2-6 0-12z" fill="#888" />
        <circle cx="777" cy="307" r="12.500" /><path d="M767 299l-7 8 6 6q-3-7 1-14z" fill="#888" />
        <path d="M278 207v6M281 207v6M285 207v6M781 206v7M784 206v7M787 206v7M796 206v7" strokeDasharray="3 1" />
      </g>
      <rect x="388" y="212.500" width="326.500" height="206" stroke="#ba68be" strokeWidth="1.500" />
      <g stroke="#4e83a5">
        <path d="M718 212.500h39M718 418.500h39M751.500 209v213M387.500 422v39M714.500 422v39M384 456.500h334" />
        <path d="M747 208l9 9M747 423l9-9M383 461l9-9M710 461l9-9" />
        <g fill="#a6c7de"><circle cx="735" cy="212.500" r="1.500" /><circle cx="735" cy="418.500" r="1.500" /><circle cx="387.500" cy="439" r="1.500" /><circle cx="714.500" cy="439" r="1.500" /></g>
        <path d="M546.500 464v7M555.500 464v7M547 467.500h8M758.500 313v6M766.500 313v6M759 316h8" stroke="#275f83" strokeWidth="1.300" />
      </g>
      <g fill="#294f70" className="font-['Roboto'] text-[9px]">
        <text x="550" y="452" textAnchor="middle">16200.0</text>
        <text x="748" y="313" textAnchor="middle" transform="rotate(-90 748 313)">10200.0</text>
      </g>
      <g stroke="#7f9cc6"><path d="M534.500 323l7 12h-14z" /><circle cx="534.500" cy="331" r="5" /><circle cx="534.500" cy="331" r="2" /><path d="M534.500 323v6M528 335l5-3M541 335l-5-3" /></g>
      <path d="M520 545h10l-5-5z" fill="#888" />
      <g stroke="#d9dde0" strokeWidth="1.500">
        <ellipse cx="848" cy="477" rx="7" ry="9" /><ellipse cx="863" cy="478" rx="7" ry="9" /><ellipse cx="835" cy="489" rx="6" ry="8" /><ellipse cx="874" cy="493" rx="6" ry="8" /><path d="M840 508q7-19 15-17 7 0 14 17" />
      </g>
      <text x="766" y="524" stroke="#d9dde0" className="font-['Liberation_Sans'] text-[42px] font-bold">B</text>
    </svg>
  );
}

function ViewArea() {
  const controls: { label: string; art: ReactNode }[] = [
    { label: "详细程度", art: <path d="M1 3h10v7H1z" stroke="#444" /> },
    { label: "视觉样式", art: <path d="M1 5h7v6H1zM1 5l3-3h7v6l-3 3M8 5l3-3" stroke="#444" /> },
    { label: "日光路径", art: <><circle cx="5" cy="5" r="3" stroke="#db9d2b" strokeWidth="1.500" /><path d="M6 6l4 5M10 6l-4 5" stroke="#bc3827" strokeWidth="1.500" /></> },
    { label: "阴影", art: <><circle cx="5" cy="5" r="3" stroke="#4a8ab4" /><path d="M1 10h5" stroke="#4a8ab4" /><path d="M6 6l4 5M10 6l-4 5" stroke="#bc3827" strokeWidth="1.500" /></> },
    { label: "裁剪视图", art: <><path d="M1 4h8v5H1zM3 2v8M8 2v8" stroke="#4a7898" /><path d="M6 6l4 5M10 6l-4 5" stroke="#bc3827" strokeWidth="1.500" /></> },
    { label: "显示裁剪区域", art: <><path d="M1 5h7v5H1zM3 3v7M8 3v7" stroke="#4a7898" /><circle cx="9" cy="5" r="2" stroke="#4a7898" /></> },
    { label: "临时隐藏", art: <path d="M1 3l3 2h5q3 3 0 5-3 0-3-3-2 3-4 0M9 5l2-2" stroke="#444" /> },
    { label: "显示隐藏的图元", art: <><circle cx="6" cy="5" r="2" stroke="#4689bf" /><path d="M6 7v4" stroke="#4689bf" /></> },
    { label: "临时视图属性", art: <path d="M1 3h9v7H1M7 7l3 3M10 7l-3 3" stroke="#bbb" /> },
    { label: "分析模型", art: <><path d="M1 5l3-3h6v7H1zM4 5v5M7 5v5" stroke="#66584b" strokeWidth="1.500" /><circle cx="9" cy="7" r="2" fill="#e5ba50" stroke="#aa8335" /></> },
  ];
  return (
    <main className="ml-[3px] flex min-w-0 flex-1 border-l border-[#666] bg-white">
      <div className="flex min-w-0 flex-1 flex-col">
        <div className="relative min-h-0 flex-1">
          <Plan />
          <div className="absolute top-[5px] right-[3px] flex gap-1">
            <Tool label="最小化视图"><Svg w={9} h={8} stroke="#555"><path d="M.5 4.500h7v2h-7z" /></Svg></Tool>
            <Tool label="还原视图"><Svg w={8} h={8} stroke="#444"><path d="M.5 2.500h5v5h-5zM2.500 2V.5h5v5H6" /><path d="M2 4h2v2H2z" /></Svg></Tool>
            <Tool label="关闭视图"><Svg w={8} h={8} stroke="#444"><path d="M1 1l5 6M6 1L1 7M.5.5h2M5 .5h2M.5 7.500h2M5 7.500h2" /></Svg></Tool>
          </div>
          <div className="absolute top-[18px] right-px flex h-[76px] w-[23px] flex-col items-center justify-between rounded-sm border border-[#aaa] bg-[#f7f7f7] px-[2px] py-[2px]">
            <span className="size-[5px] self-end rounded-full border border-[#aaa]" />
            <Tool label="控制盘"><Svg w={17} h={17} stroke="#888"><rect x="1.500" y="1.500" width="11" height="12" rx="4" /><circle cx="7" cy="7" r="3" /><text x="8" y="16" fill="#527fa7" stroke="none" className="font-['Liberation_Sans'] text-[7px]">2D</text></Svg></Tool>
            <Svg w={3} h={2} stroke="none"><path d="M0 0h3L1.500 2z" fill="#555" /></Svg>
            <span className="h-px w-4 bg-[#bbb]" />
            <Tool label="缩放区域"><Svg w={13} h={12} stroke="#76a56d"><path d="M1 1h7v6H1zM1 3h7M1 5h7M3 1v6M6 1v6" /><circle cx="9" cy="7" r="2.500" stroke="#777" fill="#fff" /><path d="M11 9l2 2" stroke="#777" /></Svg></Tool>
            <Svg w={3} h={2} stroke="none"><path d="M0 0h3L1.500 2z" fill="#555" /></Svg>
            <span className="size-[5px] self-end rounded-full border border-[#aaa]" />
          </div>
        </div>
        <div className="flex h-[15px] shrink-0 items-center bg-[#f0f0f0] pl-[17px]">
          <span className="w-[52px] font-['Liberation_Mono'] text-[9px] leading-none whitespace-pre text-[#222]">1 : 100</span>
          <div className="flex gap-[6px]">
            {controls.map((c) => <Tool key={c.label} label={c.label}><Svg w={12} h={12}>{c.art}</Svg></Tool>)}
            <Tool label="折叠" className="ml-[2px]"><Svg w={6} h={9} stroke="#222"><path d="M5 1L1 4.500 5 8" strokeWidth="1.300" /></Svg></Tool>
          </div>
          <div className="mr-[273px] ml-auto h-[12px] w-[13px] bg-[#c9c9c9]" />
        </div>
      </div>
      <div className="flex w-[12px] shrink-0 flex-col items-center bg-[#f0f0f0] pt-1">
        <Chevron up />
        <div className="mt-[187px] h-[14px] w-full bg-[#c9c9c9]" />
      </div>
    </main>
  );
}

function StatusBar() {
  return (
    <footer className="flex h-[15px] shrink-0 items-center border-t border-[#aaa] bg-linear-to-b from-[#e2e2e2] to-[#bcbcbc] pt-px text-[10px] leading-none text-[#222]">
      <span className="w-[384px] shrink-0 pl-[2px]">就绪</span>
      <Svg w={12} h={12} stroke="#888"><path d="M1 6h4v5H1zM3 6V2h3v8M9 11V4M7 6l2-3 2 3" /></Svg>
      <div className="relative ml-[3px] h-[13px] w-[133px]">
        <select aria-label="工作集" className="block h-full w-full appearance-none bg-white"><option /></select>
        <span className="pointer-events-none absolute top-[5px] right-[2px]"><Chevron color="#aaa" /></span>
      </div>
      <span className="ml-1 flex w-[36px] items-center gap-[5px]"><Svg w={10} h={10} stroke="#888"><path d="M3 1h6L6 5H2M4 5v5H1" /></Svg>:0</span>
      <span className="ml-[2px] h-[10px] w-[10px] bg-[#999]" />
      <Svg w={10} h={10} stroke="#888" className="ml-[7px]"><path d="M1 1h8v8H6V5H1z" fill="#aaa" /></Svg>
      <div className="relative ml-[5px] h-[13px] w-[101px]">
        <select aria-label="设计选项" className="block h-full w-full appearance-none bg-white pl-[2px] text-[#888]"><option>主模型</option></select>
        <span className="pointer-events-none absolute top-[5px] right-[2px]"><Chevron color="#aaa" /></span>
      </div>
    </footer>
  );
}

export default function App() {
  return (
    <div className="relative flex h-screen flex-col overflow-hidden bg-[#f0f0f0] font-['Noto_Sans','Noto_Sans_CJK_SC',sans-serif]">
      <TitleBar />
      <Ribbon />
      <OptionsBar />
      <div className="flex min-h-0 flex-1">
        <aside className="flex w-[178px] shrink-0 flex-col">
          <Properties />
          <Browser />
        </aside>
        <ViewArea />
      </div>
      <StatusBar />

      <svg className="pointer-events-none absolute top-0 left-0" width="1000" height="575" viewBox="0 0 1000 575" fill="none" aria-hidden="true">
        <rect x="4" y="262" width="162" height="21" stroke="#e31b1b" strokeWidth="4" />
        <path d="M302 206L160 263M735 172L673 103" stroke="#c91f1f" strokeWidth="2.500" />
        <path d="M144 270l14-12 2 5 6 5zM662 91l14 6-4 4-4 5z" fill="#e31b1b" />
      </svg>

      <span className="absolute right-[206px] bottom-[22px] text-[20px] leading-none text-white [text-shadow:0_0_1px_#aaa]">jin</span>
      <div className="absolute right-[207px] bottom-[19px] flex w-[5px] flex-col items-end gap-[5px]">
        <span className="h-[3px] w-[3px] bg-[#16836a]" />
        <span className="h-[3px] w-[3px] bg-[#16836a]" />
        <span className="h-[5px] w-[5px] bg-[#16836a]" />
        <span className="h-[14px] w-[3px] bg-[#16836a]" />
      </div>
      <div className="absolute right-0 bottom-0 flex h-[80px] w-[207px] flex-col items-center gap-[7px] bg-[radial-gradient(ellipse_at_50%_-5%,#8fdcf5_0%,transparent_55%),radial-gradient(ellipse_at_45%_50%,#a6c8f8_0%,transparent_75%),linear-gradient(#5e9fcd,#3f62a5)] pt-[7px] pl-2">
        <div className="bg-linear-to-r from-[#15a5c8] via-[#2d9b22] to-[#16aac8] bg-clip-text font-['Noto_Sans_CJK_SC'] text-[32px] leading-9 font-black whitespace-nowrap text-transparent">我爱学教程</div>
        <div className="font-['Open_Sans'] text-[18px] leading-5 font-bold text-[#35a66a]">www.52xjc.com</div>
      </div>
    </div>
  );
}
